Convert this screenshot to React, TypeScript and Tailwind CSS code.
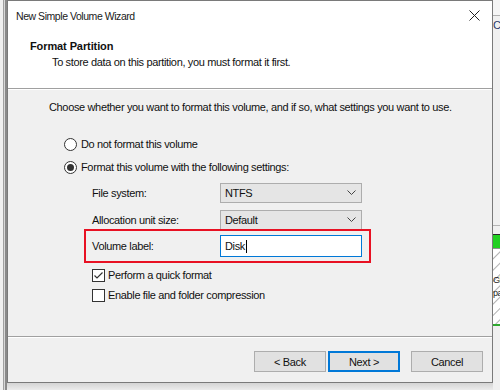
import React from "react";

function Radio({ checked }: { checked?: boolean }) {
  return (
    <span className="flex h-[13px] w-[13px] items-center justify-center rounded-full border border-[#333333] bg-white">
      {checked ? <span className="h-[7px] w-[7px] rounded-full bg-[#333333]" /> : null}
    </span>
  );
}

function Check({ checked }: { checked?: boolean }) {
  return (
    <span className="flex h-[13px] w-[13px] items-center justify-center border border-[#333333] bg-white">
      {checked ? (
        <svg width="11" height="11" viewBox="0 0 11 11">
          <polyline points="1.5,5.5 4,8 9.5,2.5" fill="none" stroke="#333333" strokeWidth="1.2" />
        </svg>
      ) : null}
    </span>
  );
}

function Select({ value }: { value: string }) {
  return (
    <div className="flex h-[20px] w-[142px] items-center justify-between border border-[#adadad] bg-[#e5e5e5] pl-[4px] pr-[5px]">
      <span>{value}</span>
      <svg width="9" height="6" viewBox="0 0 9 6">
        <polyline points="0.5,0.5 4.5,4.5 8.5,0.5" fill="none" stroke="#444444" strokeWidth="1" />
      </svg>
    </div>
  );
}

function Button({ label, primary }: { label: string; primary?: boolean }) {
  return (
    <div
      className={
        "flex h-[21px] w-[72px] items-center justify-center bg-[#e1e1e1] " +
        (primary ? "border-2 border-[#0078d7]" : "border border-[#adadad]")
      }
    >
      {label}
    </div>
  );
}

export default function App() {
  return (
    <div className="flex h-[390px] w-[500px] overflow-hidden bg-[#f0f0f0] font-['Liberation_Sans',Arial,sans-serif] text-[11px] leading-[16px] tracking-[-0.35px] text-[#111111]">
      {/* left background strip */}
      <div className="flex h-full w-[7px]">
        <div className="w-[3px] bg-[#f0f0f0]" />
        <div className="w-[1px] bg-[#a0a0a0]" />
        <div className="w-[1px] bg-[#d8d8d8]" />
        <div className="w-[2px] bg-[#8a8a8a]" />
      </div>

      {/* dialog column */}
      <div className="flex h-full w-[486px] flex-col">
        <div className="flex h-[383px] flex-col border border-[#7a7a7a] bg-[#f0f0f0]">
          {/* title bar */}
          <div className="flex h-[29px] items-center justify-between bg-white pl-[8px] pr-[8px]">
            <span className="text-[10.5px] tracking-[-0.45px] text-[#1a1a1a]">New Simple Volume Wizard</span>
            <svg width="11" height="11" viewBox="0 0 11 11" className="mr-[4px]">
              <path d="M0.5 0.5 L10.5 10.5 M10.5 0.5 L0.5 10.5" stroke="#222222" strokeWidth="1" />
            </svg>
          </div>
          {/* header */}
          <div className="h-[58px] bg-white pt-[8px]">
            <div className="pl-[22px] font-bold tracking-[-0.1px]">Format Partition</div>
            <div className="pl-[44px]">To store data on this partition, you must format it first.</div>
          </div>
          <div className="h-[1px] bg-[#a0a0a0]" />
          <div className="h-[1px] bg-[#ffffff]" />

          {/* body */}
          <div className="flex h-[246px] flex-col pt-[9px]">
            <div className="pl-[41px]">
              Choose whether you want to format this volume, and if so, what settings you want to use.
            </div>
            <div className="mt-[21px] flex items-center gap-[4px] pl-[56px]">
              <Radio />
              <span>Do not format this volume</span>
            </div>
            <div className="mt-[7px] flex items-center gap-[4px] pl-[56px]">
              <Radio checked />
              <span>Format this volume with the following settings:</span>
            </div>
            <div className="mt-[8px] flex items-center pl-[84px]">
              <span className="w-[128px]">File system:</span>
              <Select value="NTFS" />
            </div>
            <div className="mt-[7px] flex items-center pl-[84px]">
              <span className="w-[128px]">Allocation unit size:</span>
              <Select value="Default" />
            </div>
            <div className="-mt-[1px] ml-[76px] flex h-[34px] w-[287px] items-center border-2 border-[#e81123] pl-[6px]">
              <span className="w-[128px]">Volume label:</span>
              <div className="flex h-[22px] w-[142px] items-center border border-[#0078d7] bg-white pl-[4px]">
                <span>Disk</span>
                <span className="ml-[1px] h-[13px] w-[1px] bg-black" />
              </div>
            </div>
            <div className="mt-[4px] flex items-center gap-[3px] pl-[84px]">
              <Check checked />
              <span>Perform a quick format</span>
            </div>
            <div className="mt-[4px] flex items-center gap-[3px] pl-[84px]">
              <Check />
              <span>Enable file and folder compression</span>
            </div>
          </div>
          <div className="h-[1px] bg-[#a0a0a0]" />
          <div className="h-[1px] bg-[#ffffff]" />
          {/* buttons */}
          <div className="flex flex-1 items-start pt-[13px] pl-[246px]">
            <Button label="< Back" />
            <div className="ml-[2px]">
              <Button label="Next >" primary />
            </div>
            <div className="ml-[11px]">
              <Button label="Cancel" />
            </div>
          </div>
        </div>
        <div className="flex-1 bg-gradient-to-b from-[#d4d4d4] to-[#ececec]" />
      </div>

      {/* right background strip */}
      <div className="flex h-full w-[7px] flex-col bg-[#f0f0f0]">
        <div className="h-[15px] bg-[#f5f5f5]" />
        <div className="h-[1px] bg-[#b0b0b0]" />
        <div className="flex h-[18px] items-center overflow-hidden text-[11px] text-[#2b3a6b]">C</div>
        <div className="h-[191px] bg-[#f0f0f0]" />
        <div className="h-[1px] bg-[#b4b4b4]" />
        <div className="h-[8px] bg-[#f0f0f0]" />
        <div className="h-[1px] bg-[#2a2a2a]" />
        <div className="h-[13px] bg-[#22d022]" />
        <div className="h-[1px] bg-[#909090]" />
        <div className="flex h-[75px] flex-col justify-center overflow-hidden bg-white bg-[repeating-linear-gradient(135deg,#ffffff_0px,#ffffff_6px,#b0b0b0_7px,#ffffff_8px)] text-[9px] leading-[13px] tracking-[-0.5px] text-[#222]">
          <span>Gl</span>
          <span>pa</span>
        </div>
        <div className="h-[2px] bg-[#2fa82f]" />
        <div className="flex-1 bg-[#f0f0f0]" />
      </div>
    </div>
  );
}
